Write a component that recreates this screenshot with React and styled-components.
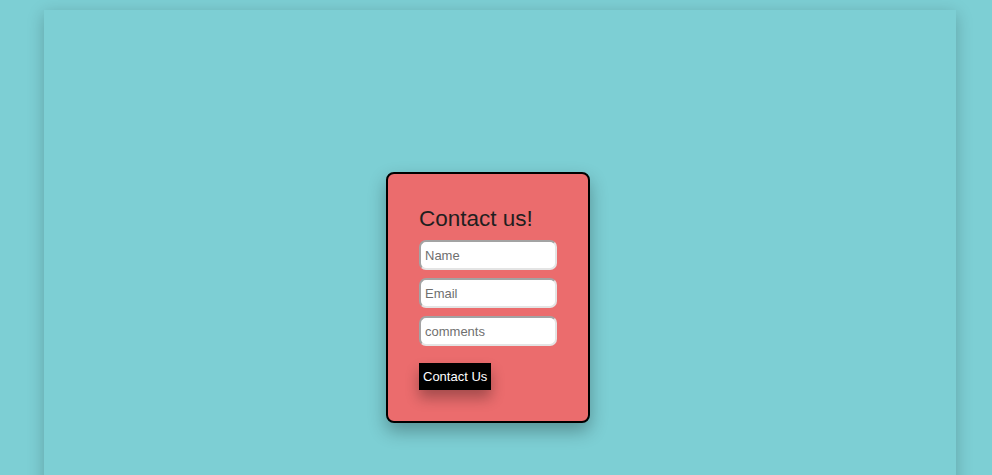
import React from 'react';
import styled, {createGlobalStyle} from "styled-components";

const GlobalStyle = createGlobalStyle`
  html, body {
    margin: 0;
    padding: 0;
    background: #7dcfd4;
    overflow: hidden;
  }
  body {
    font-family: "Liberation Sans", Arial, Helvetica, sans-serif;
  }
`;

const Page = styled.div`
  margin: 10px 36px 0 44px;
  min-height: 600px;
  background: #7dcfd4;
  box-shadow: 0 4px 16px rgba(0, 0, 0, 0.22);
  display: flex;
  align-items: flex-start;
  padding: 162px 0 0 342px;
  box-sizing: border-box;
`;

const Card = styled.form`
  width: 204px;
  box-sizing: border-box;
  padding: 30px 31px 31px;
  background: #eb6c6d;
  border: 2px solid #000;
  border-radius: 8px;
  box-shadow: 0 8px 18px rgba(0, 0, 0, 0.3);
  display: flex;
  flex-direction: column;
  align-items: flex-start;
`;

const Title = styled.h2`
  margin: 0 0 6px;
  font-size: 22.5px;
  font-weight: 400;
  line-height: 30px;
  color: #1f1f1f;
`;

const Field = styled.input`
  width: 138px;
  height: 30px;
  box-sizing: border-box;
  margin: 0 0 8px;
  padding: 0 4px;
  border-width: 2px;
  border-style: solid;
  border-color: #a3a3a3 #e4e4e4 #e4e4e4 #a3a3a3;
  border-radius: 7px;
  background: #fff;
  font-family: inherit;
  font-size: 13px;
  color: #222;
  outline: none;

  &::placeholder {
    color: #6f6f6f;
  }
`;

const SubmitButton = styled.button`
  margin-top: 9px;
  padding: 6px 4px;
  border: none;
  background: #000;
  color: #fff;
  font-family: inherit;
  font-size: 13px;
  line-height: 15px;
  box-shadow: 0 8px 14px rgba(0, 0, 0, 0.3);
  cursor: pointer;
`;

const App = () => {
    const onSubmit = (e) => {
        e.preventDefault();
    }

    return (
        <>
            <GlobalStyle/>
            <Page>
                <Card onSubmit={onSubmit}>
                    <Title>Contact us!</Title>
                    <Field type={'text'} name={'name'} placeholder={'Name'}/>
                    <Field type={'email'} name={'email'} placeholder={'Email'}/>
                    <Field type={'text'} name={'comments'} placeholder={'comments'}/>
                    <SubmitButton type={'submit'}>Contact Us</SubmitButton>
                </Card>
            </Page>
        </>
    );
};

export default App;
